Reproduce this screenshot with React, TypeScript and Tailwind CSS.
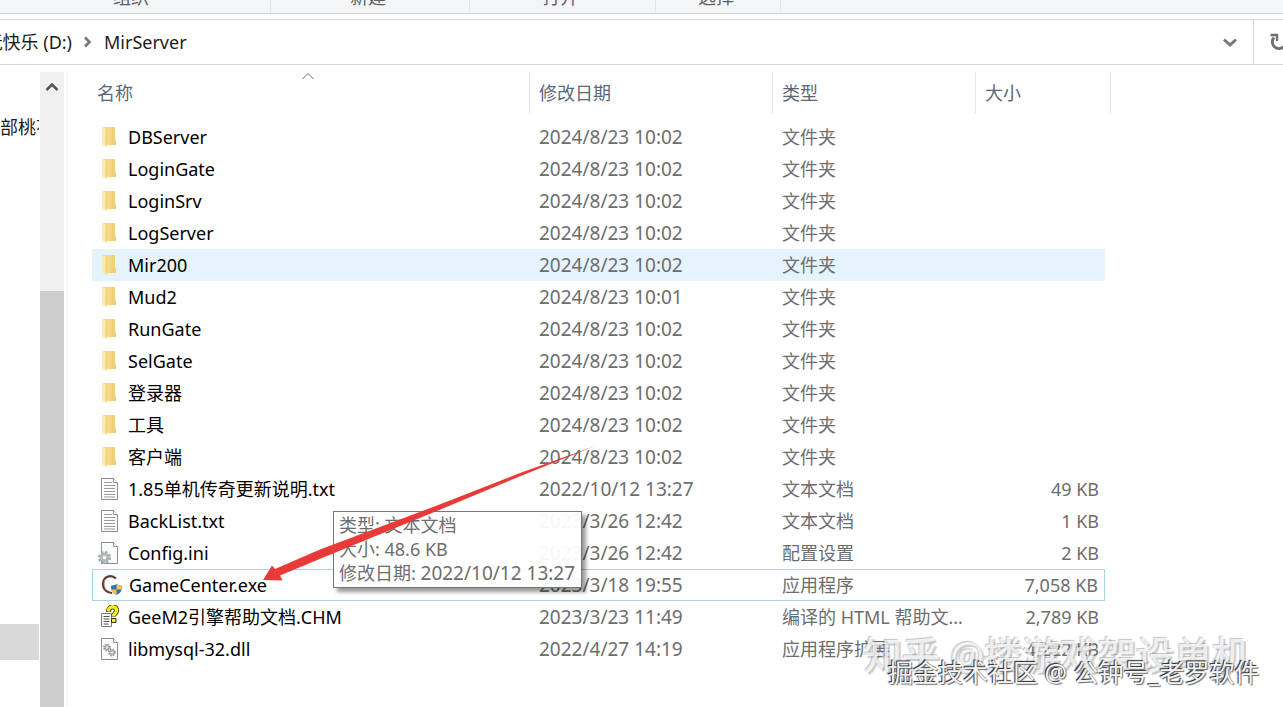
import type { ReactNode } from "react";

type Kind = "folder" | "text" | "config" | "app" | "help" | "dll";

interface Entry {
  name: string;
  date: string;
  type: string;
  size?: string;
  kind: Kind;
}

const folder = (name: string, date = "2024/8/23 10:02"): Entry => ({
  name,
  date,
  type: "文件夹",
  kind: "folder",
});

const entries: Entry[] = [
  folder("DBServer"),
  folder("LoginGate"),
  folder("LoginSrv"),
  folder("LogServer"),
  folder("Mir200"),
  folder("Mud2", "2024/8/23 10:01"),
  folder("RunGate"),
  folder("SelGate"),
  folder("登录器"),
  folder("工具"),
  folder("客户端"),
  { name: "1.85单机传奇更新说明.txt", date: "2022/10/12 13:27", type: "文本文档", size: "49 KB", kind: "text" },
  { name: "BackList.txt", date: "2023/3/26 12:42", type: "文本文档", size: "1 KB", kind: "text" },
  { name: "Config.ini", date: "2023/3/26 12:42", type: "配置设置", size: "2 KB", kind: "config" },
  { name: "GameCenter.exe", date: "2023/3/18 19:55", type: "应用程序", size: "7,058 KB", kind: "app" },
  { name: "GeeM2引擎帮助文档.CHM", date: "2023/3/23 11:49", type: "编译的 HTML 帮助文...", size: "2,789 KB", kind: "help" },
  { name: "libmysql-32.dll", date: "2022/4/27 14:19", type: "应用程序扩展", size: "4,222 KB", kind: "dll" },
];

function Page({ children }: { children?: ReactNode }) {
  return (
    <>
      <path d="M3.5 1.5h12l4 4v17h-16z" fill="#fafbfb" stroke="#8b8f91" />
      <path d="M15.5 1.5v4h4" fill="#fff" stroke="#8b8f91" />
      {children}
    </>
  );
}

function FileIcon({ kind }: { kind: Kind }) {
  return (
    <svg viewBox="0 0 24 24" className="size-6 shrink-0" aria-hidden="true">
      {kind === "folder" && (
        <>
          <path d="M4 2h13v12.500l1 .8V20H8z" fill="#f4da86" />
          <path d="M14 2h3v12.500l1 .8V20h-5z" fill="#efd077" />
          <path d="M4 2l4 2.200v17.500L4 19.500z" fill="#fbe9b0" />
          <path d="M8 4.500v17" stroke="#e6c871" strokeWidth=".7" />
        </>
      )}
      {kind === "text" && (
        <Page>
          <path d="M6 5.500h8M6 8.500h11M6 11.500h11M6 14.500h11M6 17.500h11M6 20h11" stroke="#9a9d9f" />
        </Page>
      )}
      {kind === "config" && (
        <>
          <Page />
          <circle cx="6.500" cy="16.500" r="5.300" fill="none" stroke="#a3aaad" strokeWidth="2.500" strokeDasharray="2.300 1.860" />
          <circle cx="6.500" cy="16.500" r="3.400" fill="#dce0e2" stroke="#b0b6b9" strokeWidth="3" />
          <circle cx="6.500" cy="16.500" r="1.500" fill="#fff" />
        </>
      )}
      {kind === "app" && (
        <>
          <path d="M17 5.500C11.500 .5 4 4 4 11c0 5.500 4 9 9 9" fill="none" stroke="#5b3a31" strokeWidth="2.200" />
          <path d="M6.500 6C4.500 9 4.800 14 7 17" fill="none" stroke="#c98d6b" strokeWidth=".8" />
          <path d="M17.500 11c1.800 1.300 3.400 1.700 5.500 1.700 0 5-1.600 7.600-5.500 9.300-3.900-1.700-5.500-4.300-5.500-9.300 2.100 0 3.700-.4 5.500-1.700z" fill="#2e70b8" />
          <path d="M17.500 11c1.800 1.300 3.400 1.700 5.500 1.700l-.2 3.800h-5.300zM12.200 16.500h5.300V22c-3-1.200-4.700-3-5.300-5.500z" fill="#f4c64a" />
        </>
      )}
      {kind === "help" && (
        <>
          <path d="M3.500 8.500h10v13h-10z" fill="#fff" stroke="#7d7d75" />
          <path d="M5.500 11.500h6M5.500 14h6M5.500 16.500h6M5.500 19h5" stroke="#55554f" />
          <path d="M10.500 7C10.500-.2 19.500 .8 18.500 6c-.4 2.500-3 3-3 5.500" fill="none" stroke="#33330c" strokeWidth="5" />
          <path d="M10.500 6.500C10.500-.2 19.500 .8 18.500 6c-.4 2.500-3 3-3 5" fill="none" stroke="#f5ee22" strokeWidth="3.400" />
          <path d="M13.500 13.500h4.500v4h-4.500z" fill="#f5ee22" stroke="#33330c" />
        </>
      )}
      {kind === "dll" && (
        <Page>
          <circle cx="9" cy="10.500" r="3" fill="#e7eaeb" stroke="#8f9598" strokeWidth="1.800" strokeDasharray="1.500 .86" />
          <circle cx="9" cy="10.500" r="1.800" fill="none" stroke="#8f9598" strokeWidth=".9" />
          <circle cx="14" cy="15.500" r="3" fill="#e7eaeb" stroke="#8f9598" strokeWidth="1.800" strokeDasharray="1.500 .86" />
          <circle cx="14" cy="15.500" r="1.800" fill="none" stroke="#8f9598" strokeWidth=".9" />
        </Page>
      )}
    </svg>
  );
}

function Ribbon() {
  const cell = "flex shrink-0 items-end justify-center border-r border-[#e3e5e7] pb-1";
  return (
    <div className="flex h-[14px] items-end overflow-hidden border-b border-[#d4d5d7] bg-[#f4f5f7] leading-6 text-[#5c6166]">
      <div className={`${cell} w-[271px] pr-2`}>组织</div>
      <div className={`${cell} w-[199px] pr-1`}>新建</div>
      <div className={`${cell} w-[186px] pr-1`}>打开</div>
      <div className={`${cell} w-[125px] pr-1`}>选择</div>
    </div>
  );
}

function AddressBar() {
  return (
    <nav aria-label="地址" className="mt-[5px] flex h-[46px] items-stretch border-y border-[#d6d6d6]">
      <div className="flex min-w-0 flex-1 items-center gap-2">
        <div className="flex w-[72px] shrink-0 justify-end overflow-hidden">
          <a href="#drive" className="whitespace-nowrap">玩快乐 (D:)</a>
        </div>
        <svg viewBox="0 0 16 16" className="size-4 shrink-0" aria-hidden="true">
          <path d="M5 3.500l4.500 4.500L5 12.500" fill="none" stroke="#777" strokeWidth="2.600" />
        </svg>
        <a href="#mirserver">MirServer</a>
      </div>
      <button aria-label="以前的位置" className="flex w-[46px] items-center justify-center">
        <svg viewBox="0 0 16 16" className="size-4" aria-hidden="true">
          <path d="M2 5.500L8 11l6-5.500" fill="none" stroke="#777" strokeWidth="3" />
        </svg>
      </button>
      <button aria-label="刷新" className="flex w-[30px] items-center overflow-hidden border-l border-[#d6d6d6] pl-4">
        <svg viewBox="0 0 20 20" className="size-5 shrink-0" aria-hidden="true">
          <path d="M4 5.500a6.700 6.700 0 1 0 10 0" fill="none" stroke="#6f6f6f" strokeWidth="2.900" />
          <path d="M.5 3H7v6" fill="none" stroke="#6f6f6f" strokeWidth="2.400" />
        </svg>
      </button>
    </nav>
  );
}

function Sidebar() {
  return (
    <aside className="flex w-[68px] shrink-0 border-r border-[#f3f3f3]">
      <div className="flex w-[39px] flex-col overflow-hidden">
        <a href="#pinned" className="mt-[43px] whitespace-nowrap leading-6">部桃花</a>
        <div className="mt-[485px] h-9 bg-[#d9d9d9]" />
      </div>
      <div className="ml-px flex w-6 flex-col bg-[#f0f0f0]">
        <button aria-label="向上滚动" className="flex h-[219px] items-start justify-center pt-2">
          <svg viewBox="0 0 14 14" className="size-3.5" aria-hidden="true">
            <path d="M1.500 10L7 4.500l5.500 5.500" fill="none" stroke="#555" strokeWidth="2.600" />
          </svg>
        </button>
        <div className="flex-1 bg-[#cdcdcd]" />
      </div>
    </aside>
  );
}

const headingButton = "relative flex h-[41px] w-full items-center border-r border-[#e2e4e6] text-[#5c6874]";

function Heading({ children, sorted }: { children: string; sorted?: boolean }) {
  return (
    <th className="h-[49px] p-0 text-left align-top font-normal" aria-sort={sorted ? "ascending" : undefined}>
      <button className={`${headingButton} ${sorted ? "pl-[5px]" : "pl-[9px]"}`}>
        {children}
        {sorted && (
          <svg viewBox="0 0 14 8" className="absolute top-0 left-[209px] h-2 w-3.5" aria-hidden="true">
            <path d="M1.500 7L7 1.500 12.500 7" fill="none" stroke="#666" />
          </svg>
        )}
      </button>
    </th>
  );
}

function rowCell(name: string) {
  if (name === "Mir200") return "h-8 bg-[#e5f3fd]";
  if (name === "GameCenter.exe") return "h-8 border-y border-[#a9d3df] first:border-l nth-4:border-r";
  return "h-8";
}

function FileTable() {
  return (
    <table className="w-[1024px] table-fixed border-separate border-spacing-0 text-[#6d6d6d]">
      <colgroup>
        <col className="w-[438px]" />
        <col className="w-[243px]" />
        <col className="w-[203px]" />
        <col className="w-[129px]" />
        <col />
      </colgroup>
      <thead>
        <tr>
          <Heading sorted>名称</Heading>
          <Heading>修改日期</Heading>
          <Heading>类型</Heading>
          <th colSpan={2} className="p-0 pr-[5px] text-left align-top font-normal">
            <button className={`${headingButton} pl-[9px]`}>大小</button>
          </th>
        </tr>
      </thead>
      <tbody>
        {entries.map((e) => {
          const cell = rowCell(e.name);
          return (
            <tr key={e.name} className="whitespace-nowrap leading-6">
              <td className={`${cell} p-0 text-black`}>
                <div className="flex items-center gap-1.5 pl-1.5">
                  <FileIcon kind={e.kind} />
                  <span>{e.name}</span>
                </div>
              </td>
              <td className={`${cell} p-0 pl-[9px] text-[19px]`}>{e.date}</td>
              <td className={`${cell} p-0 pl-[9px]`}>{e.type}</td>
              <td className={`${cell} p-0 pr-1.5 text-right`}>{e.size}</td>
              <td className="p-0" />
            </tr>
          );
        })}
      </tbody>
    </table>
  );
}

export default function App() {
  return (
    <div className="relative flex min-h-screen flex-col overflow-hidden bg-white font-['Noto_Sans','Noto_Sans_CJK_SC',sans-serif] text-[18px] font-normal leading-6 text-[#1c1c1c]">
      <Ribbon />
      <AddressBar />
      <div className="mt-[7px] flex flex-1">
        <Sidebar />
        <main className="min-w-0 flex-1 pl-6">
          <FileTable />
        </main>
      </div>

      <div
        role="tooltip"
        className="absolute top-[511px] left-[333px] border border-[#767676] bg-white/95 pt-px pr-1.5 pb-0.5 pl-[5px] whitespace-nowrap text-[#6d6d6d] shadow-[4px_4px_4px_rgba(0,0,0,0.4)]"
      >
        <p>类型: 文本文档</p>
        <p>大小: 48.6 KB</p>
        <p>修改日期: <span className="text-[19px]">2022/10/12 13:27</span></p>
      </div>

      <svg viewBox="0 0 340 140" className="pointer-events-none absolute top-[444px] left-[260px] h-[140px] w-[340px]" aria-hidden="true">
        <path d="M3 136L12 121.500l3 3.500L60 105.500 177 61.500 260 29 335 2 262 31.500 178 66.500 62 114 20 131.500l2.500 5z" fill="#e93a3a" />
      </svg>

      <div className="pointer-events-none absolute top-[634px] left-[864px] whitespace-nowrap text-[38px] leading-10 font-medium text-white/75 [text-shadow:2px_2px_1px_rgba(110,110,110,0.35),-1px_-1px_1px_rgba(110,110,110,0.4)]">
        知乎 @搂游戏架设单机
      </div>
      <div className="pointer-events-none absolute top-[656px] left-[888px] whitespace-nowrap text-[25px] leading-8 text-[#f4f4f4] [text-shadow:1px_1px_1px_#666,-1px_-1px_1px_#222]">
        掘金技术社区 @ 公钟号_老罗软件
      </div>
    </div>
  );
}
